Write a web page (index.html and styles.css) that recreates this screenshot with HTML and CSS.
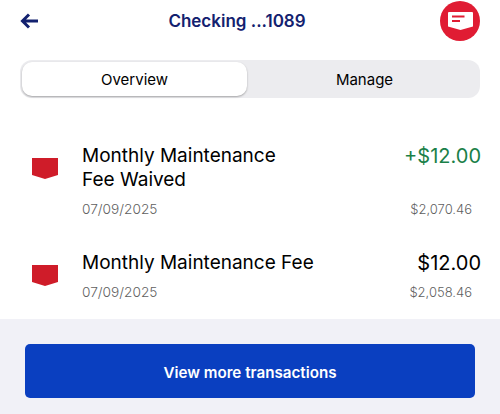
FILE: index.html
```html
<!DOCTYPE html>
<html lang="en">
<head>
  <meta charset="UTF-8" />
  <meta name="viewport" content="width=device-width, initial-scale=1.0"/>
  <title>Checking ...1089</title>
  <link rel="stylesheet" href="styles.css">
</head>
<body>
  <div class="screen">
    <header class="topbar">
      <svg class="back" width="18" height="16" viewBox="0 0 18 16">
        <path d="M9 1.500 2.500 8 9 14.500M3 8h15" fill="none" stroke="#13216f" stroke-width="3"/>
      </svg>
      <h1>Checking ...1089</h1>
      <div class="chat">
        <svg width="25" height="18" viewBox="0 0 25 18">
          <path d="M1 0h23a1 1 0 0 1 1 1v13.500L12.500 18 0 14.500V1a1 1 0 0 1 1-1z" fill="#fff"/>
          <path d="M4 4.500h12.500M4 9h8" fill="none" stroke="#e01c33" stroke-width="1.800"/>
        </svg>
      </div>
    </header>

    <div class="tabs">
      <div class="tab active">Overview</div>
      <div class="tab other">Manage</div>
    </div>

    <main class="list">
      <div class="row first">
        <svg class="flag" width="26" height="21" viewBox="0 0 26 21">
          <path d="M0 0h26v17L13 21 0 17z" fill="#cf1c29"/>
        </svg>
        <div class="info">
          <div class="name">Monthly Maintenance<br>Fee Waived</div>
          <div class="date">07/09/2025</div>
        </div>
        <div class="money">
          <div class="amount credit">+$12.00</div>
          <div class="balance">$2,070.46</div>
        </div>
      </div>
      <div class="row">
        <svg class="flag" width="26" height="21" viewBox="0 0 26 21">
          <path d="M0 0h26v17L13 21 0 17z" fill="#cf1c29"/>
        </svg>
        <div class="info">
          <div class="name">Monthly Maintenance Fee</div>
          <div class="date">07/09/2025</div>
        </div>
        <div class="money">
          <div class="amount">$12.00</div>
          <div class="balance">$2,058.46</div>
        </div>
      </div>
    </main>

    <footer class="bottom">
      <button class="more">View more transactions</button>
    </footer>
  </div>
</body>
</html>
```

FILE: styles.css
```css
* {
  box-sizing: border-box;
}
body {
  margin: 0;
  font-family: 'Inter', sans-serif;
  background: white;
  color: #000;
}
.screen {
  width: 500px;
  height: 414px;
  display: flex;
  flex-direction: column;
  overflow: hidden;
}
.topbar {
  height: 42px;
  padding: 0 20px;
  display: flex;
  align-items: center;
  justify-content: space-between;
}
.topbar h1 {
  margin: 0 0 0 -4px;
  font-size: 17px;
  font-weight: 600;
  color: #13216f;
}
.chat {
  width: 40px;
  height: 40px;
  border-radius: 50%;
  background: #e01c33;
  display: flex;
  align-items: center;
  justify-content: center;
}
.tabs {
  margin: 18px 20px 0;
  height: 38px;
  padding: 2px;
  display: flex;
  background: #ececef;
  border-radius: 12px;
}
.tab {
  flex: 1;
  display: flex;
  align-items: center;
  justify-content: center;
  font-size: 15px;
}
.tab.other {
  padding-left: 4px;
}
.tab.active {
  flex: none;
  width: 225px;
  background: white;
  border-radius: 10px;
  box-shadow: 0 1px 2px rgba(0, 0, 0, 0.3);
}
.list {
  flex: 1;
  padding: 46px 19px 0 32px;
}
.row {
  display: flex;
  align-items: flex-start;
  margin-top: 34px;
}
.row.first {
  margin-top: 0;
}
.flag {
  margin-top: 14px;
  flex-shrink: 0;
}
.info {
  flex: 1;
  margin-left: 24px;
}
.name {
  font-size: 19px;
  line-height: 24px;
}
.date {
  margin-top: 9px;
  font-size: 13.700px;
  font-weight: 300;
  color: #5f5f5f;
}
.money {
  text-align: right;
}
.amount {
  font-size: 20px;
  line-height: 24px;
}
.amount.credit {
  color: #1a8048;
}
.balance {
  margin: 9px 9px 0 0;
  font-size: 13px;
  font-weight: 300;
  color: #5f5f5f;
}
.row.first .balance {
  margin-top: 33px;
}
.bottom {
  height: 95px;
  padding: 25px 25px 16px;
  background: #f1f1f7;
}
.more {
  width: 100%;
  height: 54px;
  padding-top: 4px;
  border: none;
  border-radius: 5px;
  background: #0a3fc0;
  color: white;
  font-family: inherit;
  font-size: 15.200px;
  font-weight: 600;
}
```
